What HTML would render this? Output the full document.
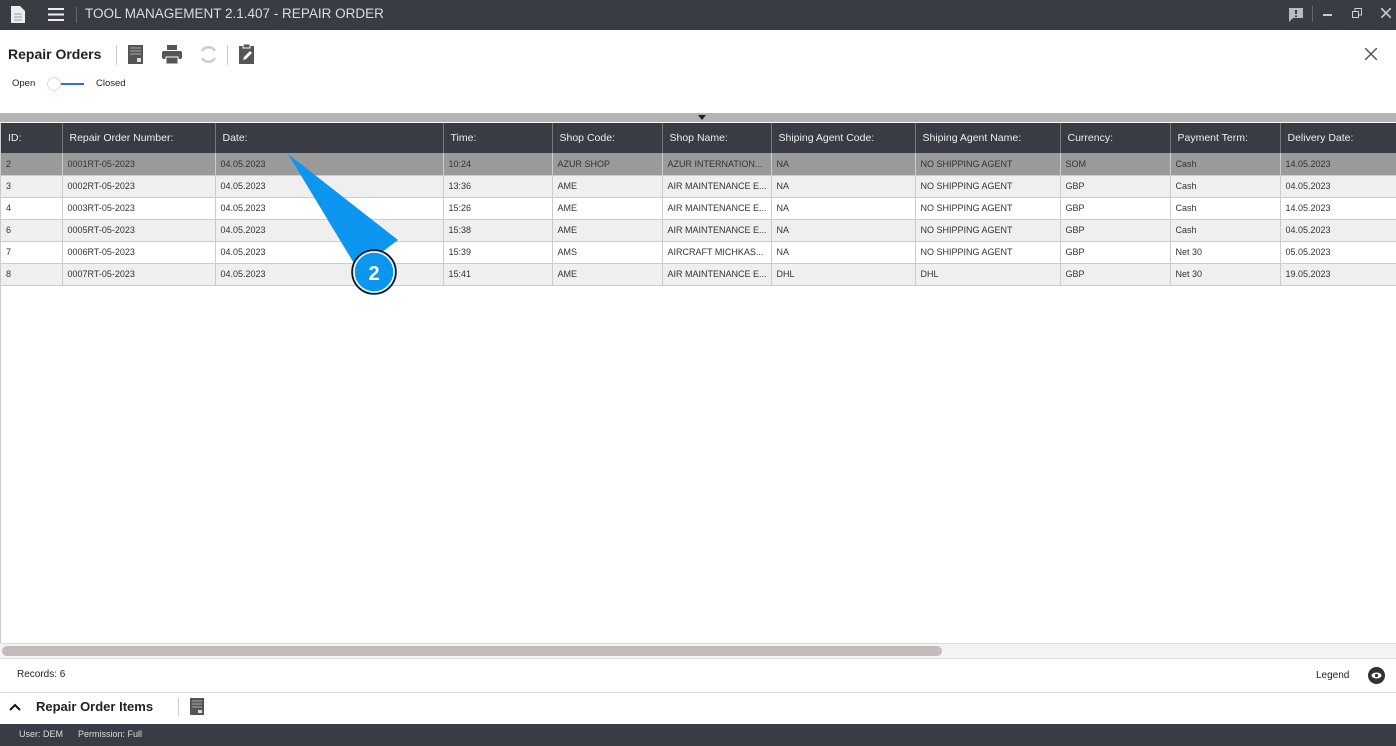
<!DOCTYPE html>
<html><head><style>
*{margin:0;padding:0;box-sizing:border-box}
body{width:1396px;height:746px;position:relative;background:#fff;font-family:"Liberation Sans",sans-serif;overflow:hidden;color:#222}
.abs{position:absolute}
#top{left:0;top:0;width:1396px;height:30px;background:#393c44;color:#ddd;font-size:13.5px}
table{border-collapse:collapse;position:absolute;left:1px;top:123px;width:1396px;table-layout:fixed}
th{background:#393c44;color:#eee;font-weight:normal;font-size:10.5px;text-align:left;height:30px;padding-left:7px;border-right:1px solid #777}
td{font-size:9px;color:#333;height:22px;padding-left:5px;border-right:1px solid #ccc;border-bottom:1px solid #ccc;white-space:nowrap;overflow:hidden}
tr.sel td{background:#9a9a9a;color:#333}
tr.g td{background:#efefef}
</style></head><body>
<div id="top" class="abs">
<svg class="abs" style="left:11px;top:6px" width="14" height="17"><path d="M0 0h9l5 5v12H0z" fill="#eee"/><path d="M3 8h8M3 11h8M3 14h8" stroke="#999"/></svg>
<svg class="abs" style="left:48px;top:8px" width="16" height="13"><path d="M0 1h16M0 6.5h16M0 12h16" stroke="#eee" stroke-width="2"/></svg>
<div class="abs" style="left:76px;top:7px;width:1px;height:16px;background:#666"></div>
<div class="abs" style="left:85px;top:6px">TOOL MANAGEMENT 2.1.407 - REPAIR ORDER</div>
<svg class="abs" style="left:1289px;top:8px" width="14" height="14"><path d="M0 0h14v10H4l-4 4z" fill="#bbb"/><path d="M7 2v4M7 7.5v1.5" stroke="#393c44" stroke-width="2"/></svg>
<div class="abs" style="left:1312px;top:6px;width:1px;height:16px;background:#666"></div>
<div class="abs" style="left:1323px;top:14px;width:9px;height:2px;background:#ccc"></div>
<svg class="abs" style="left:1352px;top:8px" width="10" height="10"><rect x="0.5" y="3.5" width="6" height="6" fill="none" stroke="#ccc"/><path d="M3 3V.5h6.5V7H7" fill="none" stroke="#ccc"/></svg>
<svg class="abs" style="left:1381px;top:8px" width="10" height="10"><path d="M0 0l10 10M10 0L0 10" stroke="#ccc" stroke-width="1.6"/></svg>
</div>
<div class="abs" style="left:8px;top:46px;font-weight:bold;font-size:14px">Repair Orders</div>
<div class="abs" style="left:116px;top:45px;width:1px;height:20px;background:#ccc"></div>
<svg class="abs" style="left:128px;top:45px" width="15" height="19"><rect width="15" height="19" fill="#555"/><path d="M2 3h11M2 6h11M2 9h11" stroke="#aaa"/><rect x="9" y="13" width="4" height="4" fill="#ddd"/></svg>
<svg class="abs" style="left:162px;top:45px" width="20" height="19"><rect x="5" y="0" width="10" height="5" fill="#555"/><rect x="0" y="6" width="20" height="8" rx="2" fill="#555"/><rect x="4" y="12" width="12" height="7" fill="#555" stroke="#fff"/></svg>
<svg class="abs" style="left:199px;top:45px" width="19" height="19"><path d="M16 6A7.5 7.5 0 0 0 3 6M3 13a7.5 7.5 0 0 0 13 0" fill="none" stroke="#ccc" stroke-width="2.5"/></svg>
<div class="abs" style="left:227px;top:45px;width:1px;height:20px;background:#ccc"></div>
<svg class="abs" style="left:239px;top:44px" width="15" height="20"><rect x="0" y="2" width="15" height="18" fill="#555"/><rect x="4" y="0" width="7" height="4" fill="#555" stroke="#fff"/><path d="M4 16l1-3 6-6 2 2-6 6z" fill="#fff"/></svg>
<svg class="abs" style="left:1365px;top:48px" width="12" height="12"><path d="M0 0l12 12M12 0L0 12" stroke="#555" stroke-width="1.5"/></svg>
<div class="abs" style="left:12px;top:78px;font-size:9.5px">Open</div>
<div class="abs" style="left:55px;top:83px;width:29px;height:2px;background:#2a6fe0"></div>
<div class="abs" style="left:47px;top:77px;width:14px;height:14px;border-radius:50%;background:#fff;border:1px solid #ddd"></div>
<div class="abs" style="left:96px;top:78px;font-size:9.5px">Closed</div>
<div class="abs" style="left:0;top:113px;width:1396px;height:9px;background:#b4b4b4"></div>
<svg class="abs" style="left:698px;top:115px" width="8" height="5"><path d="M0 0h8L4 5z" fill="#222"/></svg>
<table>
<colgroup><col style="width:61px"><col style="width:153px"><col style="width:228px"><col style="width:109px"><col style="width:110px"><col style="width:109px"><col style="width:144px"><col style="width:145px"><col style="width:110px"><col style="width:110px"><col style="width:117px"></colgroup>
<tr><th>ID:</th><th>Repair Order Number:</th><th>Date:</th><th>Time:</th><th>Shop Code:</th><th>Shop Name:</th><th>Shiping Agent Code:</th><th>Shiping Agent Name:</th><th>Currency:</th><th>Payment Term:</th><th>Delivery Date:</th></tr>
<tr class="sel"><td>2</td><td>0001RT-05-2023</td><td>04.05.2023</td><td>10:24</td><td>AZUR SHOP</td><td>AZUR INTERNATION...</td><td>NA</td><td>NO SHIPPING AGENT</td><td>SOM</td><td>Cash</td><td>14.05.2023</td></tr>
<tr class="g"><td>3</td><td>0002RT-05-2023</td><td>04.05.2023</td><td>13:36</td><td>AME</td><td>AIR MAINTENANCE E...</td><td>NA</td><td>NO SHIPPING AGENT</td><td>GBP</td><td>Cash</td><td>04.05.2023</td></tr>
<tr><td>4</td><td>0003RT-05-2023</td><td>04.05.2023</td><td>15:26</td><td>AME</td><td>AIR MAINTENANCE E...</td><td>NA</td><td>NO SHIPPING AGENT</td><td>GBP</td><td>Cash</td><td>14.05.2023</td></tr>
<tr class="g"><td>6</td><td>0005RT-05-2023</td><td>04.05.2023</td><td>15:38</td><td>AME</td><td>AIR MAINTENANCE E...</td><td>NA</td><td>NO SHIPPING AGENT</td><td>GBP</td><td>Cash</td><td>04.05.2023</td></tr>
<tr><td>7</td><td>0006RT-05-2023</td><td>04.05.2023</td><td>15:39</td><td>AMS</td><td>AIRCRAFT MICHKAS...</td><td>NA</td><td>NO SHIPPING AGENT</td><td>GBP</td><td>Net 30</td><td>05.05.2023</td></tr>
<tr class="g"><td>8</td><td>0007RT-05-2023</td><td>04.05.2023</td><td>15:41</td><td>AME</td><td>AIR MAINTENANCE E...</td><td>DHL</td><td>DHL</td><td>GBP</td><td>Net 30</td><td>19.05.2023</td></tr>
</table>
<div class="abs" style="left:0;top:123px;width:1px;height:520px;background:#ccc"></div>
<svg class="abs" style="left:280px;top:150px" width="130" height="150"><path d="M8 4L118 90L78 120z" fill="#0d96ef"/><circle cx="94" cy="122" r="22" fill="#0d96ef" stroke="#111" stroke-width="1.5"/><circle cx="94" cy="122" r="20" fill="none" stroke="#fff" stroke-width="1.5"/><text x="94" y="130" text-anchor="middle" font-family="Liberation Sans" font-weight="bold" font-size="20" fill="#fff">2</text></svg>
<div class="abs" style="left:0;top:643px;width:1396px;height:15px;background:#f3f3f3;border-top:1px solid #ddd"></div>
<div class="abs" style="left:2px;top:646px;width:940px;height:10px;border-radius:5px;background:#c4baba"></div>
<div class="abs" style="left:0;top:658px;width:1396px;height:1px;background:#ddd"></div>
<div class="abs" style="left:17px;top:669px;font-size:10px">Records: 6</div>
<div class="abs" style="left:1316px;top:670px;font-size:10px">Legend</div>
<svg class="abs" style="left:1368px;top:667px" width="17" height="17"><circle cx="8.5" cy="8.5" r="8.5" fill="#333"/><ellipse cx="8.5" cy="8.5" rx="5" ry="3" fill="#fff"/><circle cx="8.5" cy="8.5" r="1.6" fill="#333"/></svg>
<div class="abs" style="left:0;top:692px;width:1396px;height:1px;background:#ddd"></div>
<svg class="abs" style="left:9px;top:703px" width="12" height="8"><path d="M1 7l5-5 5 5" fill="none" stroke="#111" stroke-width="2"/></svg>
<div class="abs" style="left:36px;top:699px;font-weight:bold;font-size:13px">Repair Order Items</div>
<div class="abs" style="left:178px;top:698px;width:1px;height:18px;background:#ccc"></div>
<svg class="abs" style="left:190px;top:698px" width="14" height="17"><rect width="14" height="17" fill="#555"/><path d="M2 3h10M2 6h10M2 9h10" stroke="#aaa"/><rect x="8" y="12" width="4" height="3" fill="#ddd"/></svg>
<div class="abs" style="left:0;top:724px;width:1396px;height:22px;background:#393c44;color:#ddd;font-size:9px"><span class="abs" style="left:19px;top:5px">User: DEM</span><span class="abs" style="left:78px;top:5px">Permission: Full</span></div>
</body></html>
